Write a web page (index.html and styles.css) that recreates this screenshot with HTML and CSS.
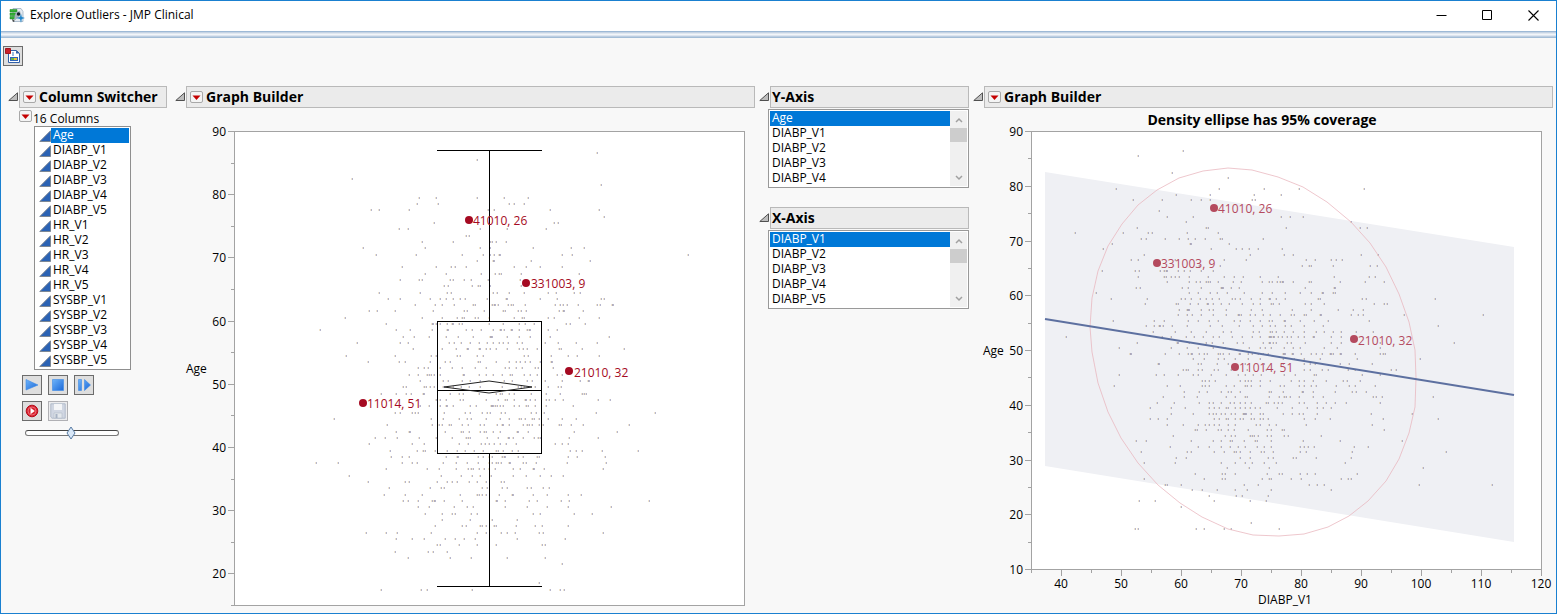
FILE: index.html
```html
<!DOCTYPE html>
<html lang="en">
<head>
<meta charset="utf-8">
<title>Explore Outliers - JMP Clinical</title>
<link rel="stylesheet" href="styles.css">
</head>
<body>
<svg class="defs" aria-hidden="true">
  <symbol id="fold" viewBox="0 0 10 10"><path d="M9.500 .8V8.500H.8Z" fill="#bdbdbd" stroke="#505050"/></symbol>
  <symbol id="red" viewBox="0 0 13 13"><path d="M2.500 4.500h8l-4 4.500z" fill="#c40000"/></symbol>
  <symbol id="up" viewBox="0 0 8 6"><path d="M1 5l3-3 3 3" fill="none" stroke="#a0a0a0" stroke-width="1.500"/></symbol>
  <symbol id="down" viewBox="0 0 8 6"><path d="M1 1l3 3 3-3" fill="none" stroke="#a0a0a0" stroke-width="1.500"/></symbol>
  <linearGradient id="blue" x2="1" y2="1"><stop stop-color="#6eb4fa"/><stop offset="1" stop-color="#1b68d8"/></linearGradient>
</svg>
<div class="window">
  <header class="titlebar">
    <svg class="app-icon" viewBox="0 0 16 16" aria-hidden="true">
      <path d="M4 .5h8l2 3v10H4z" fill="#e4ebf2" stroke="#9db0c3" stroke-width=".8"/>
      <path d="M1 1.500h7v2.500H1zM1 5h6v2.500H1zM1 8.500h6v2.500H1z" fill="#35b035" stroke="#188323" stroke-width=".5"/>
      <path d="M7 4l4-1 1 4-3 3-4 2 1-5z" fill="#a5b2bd"/><circle cx="9.500" cy="6" r="1.700" fill="#15232e"/>
      <path d="M12 5.500l.8 3.500 3.200 1-3.200 1-.8 4-1-4-4-1 4-1z" fill="#2085ca"/>
      <path d="M3 11l3 2-2 1z" fill="#444"/>
    </svg>
    <h1 class="window-title">Explore Outliers - JMP Clinical</h1>
    <div class="window-controls">
      <button type="button" aria-label="Minimize"><svg viewBox="0 0 11 11"><path d="M.5 5.500h10" stroke="#000"/></svg></button>
      <button type="button" aria-label="Maximize"><svg viewBox="0 0 11 11"><path d="M.5 .5h9v9h-9z" fill="none" stroke="#000"/></svg></button>
      <button type="button" aria-label="Close"><svg viewBox="0 0 11 11"><path d="M.5 .5l10 10M10.500 .5l-10 10" stroke="#000" stroke-width="1.100"/></svg></button>
    </div>
  </header>
  <div class="band"></div>
  <div class="toolbar">
    <button type="button" class="tool" aria-label="Report">
      <svg viewBox="0 0 16 16"><path d="M3.500 2.500h8l3 3v9h-11z" fill="#fff" stroke="#3160a8"/><path d="M11 2.500v3h3.500z" fill="#3160a8"/><path d="M7 4h2v4H7z" fill="#9abce0"/><path d="M5 9h8v4H5z" fill="#2d63b8"/><path d="M6 10h3v2H6z" fill="#63b54b"/><path d="M9 10h3v2H9z" fill="#e2c13c"/><path d="M.5 .5h5v5h-5z" fill="#c91f28" stroke="#a01820"/></svg>
    </button>
  </div>
  <main class="panels">
    <section class="panel narrow">
      <div class="panel-head"><svg class="fold"><use href="#fold"/></svg><div class="bar"><button type="button" class="menu" aria-label="Column Switcher menu"><svg viewBox="0 0 13 13"><use href="#red"/></svg></button><h2>Column Switcher</h2></div></div>
      <div class="switcher">
        <div class="sub"><button type="button" class="menu" aria-label="Columns menu"><svg viewBox="0 0 13 13"><use href="#red"/></svg></button><span>16 Columns</span></div>
        <ul class="columns" id="columns" role="listbox" aria-label="16 Columns"></ul>
        <div class="player">
          <button type="button" class="tool" aria-label="Play"><svg viewBox="0 0 16 16"><path d="M2 2.500l12 5.500-12 5z" fill="url(#blue)" stroke="#3d8ae6" stroke-width=".6"/></svg></button>
          <button type="button" class="tool" aria-label="Stop"><svg viewBox="0 0 16 16"><path d="M2.500 2.500h11v11h-11z" fill="url(#blue)" stroke="#3d8ae6" stroke-width=".6"/></svg></button>
          <button type="button" class="tool" aria-label="Step"><svg viewBox="0 0 16 16"><path d="M2.500 2.500h3v11h-3zM8.500 2.500l6 5.500-6 5.500z" fill="url(#blue)" stroke="#3d8ae6" stroke-width=".6"/></svg></button>
          <button type="button" class="tool" aria-label="Record"><svg viewBox="0 0 16 16"><circle cx="8" cy="8" r="5.800" fill="#d9202e" stroke="#b40e1c"/><circle cx="8" cy="8" r="4" fill="none" stroke="#ee8a90" stroke-width=".7"/><path d="M6.500 4.800L10.800 8l-4.300 3.200z" fill="#fff"/></svg></button>
          <button type="button" class="tool" aria-label="Save" disabled><svg viewBox="0 0 16 16"><path d="M.8 .8h14.400v14.400H2L.8 14z" fill="#d0d6e2" stroke="#b3bccb"/><path d="M4 1h8v6H4z" fill="#f4f5f7"/><path d="M4 10h8v5H4z" fill="#e3e7ec" stroke="#b3bccb" stroke-width=".6"/><path d="M5.500 11h2v4h-2z" fill="#a7b2c4"/></svg></button>
        </div>
        <input class="speed" type="range" min="0" max="100" value="49" aria-label="Animation speed">
      </div>
    </section>
    <section class="panel">
      <div class="panel-head"><svg class="fold"><use href="#fold"/></svg><div class="bar"><button type="button" class="menu" aria-label="Graph Builder menu"><svg viewBox="0 0 13 13"><use href="#red"/></svg></button><h2>Graph Builder</h2></div></div>
      <svg class="graph" id="box-plot" viewBox="175 108 580 504" role="img" aria-label="Box plot of Age">
        <rect class="frame" x="234.500" y="131.500" width="510" height="474"/>
        <path class="glow"/>
        <path class="points"/>
        <path class="outline" d="M437 150.500h105M489.500 150v171M437.500 321.500h104v132h-104zM437 390.500h105M489.500 454v132M437 586.500h105"/>
        <path class="diamond" d="M444 387L489 381 532 387 489 393Z"/>
        <g class="ticks"></g>
        <text x="186" y="373">Age</text>
        <g class="marks"><circle cx="469" cy="220" r="4"/><text x="473" y="225">41010, 26</text><circle cx="526" cy="283" r="4"/><text x="531" y="288">331003, 9</text><circle cx="569" cy="371" r="4"/><text x="574" y="377">21010, 32</text><circle cx="363" cy="403" r="4"/><text x="367" y="408">11014, 51</text></g>
      </svg>
    </section>
    <div class="axes">
      <section class="panel">
        <div class="panel-head"><svg class="fold"><use href="#fold"/></svg><div class="bar plain"><h2>Y-Axis</h2></div></div>
        <div class="picker">
          <ul role="listbox" aria-label="Y-Axis"><li role="option" aria-selected="true">Age</li><li role="option">DIABP_V1</li><li role="option">DIABP_V2</li><li role="option">DIABP_V3</li><li role="option">DIABP_V4</li></ul>
          <div class="scroll"><button type="button" aria-label="Scroll up"><svg viewBox="0 0 8 6"><use href="#up"/></svg></button><span class="thumb"></span><button type="button" aria-label="Scroll down"><svg viewBox="0 0 8 6"><use href="#down"/></svg></button></div>
        </div>
      </section>
      <section class="panel">
        <div class="panel-head"><svg class="fold"><use href="#fold"/></svg><div class="bar plain"><h2>X-Axis</h2></div></div>
        <div class="picker">
          <ul role="listbox" aria-label="X-Axis"><li role="option" aria-selected="true">DIABP_V1</li><li role="option">DIABP_V2</li><li role="option">DIABP_V3</li><li role="option">DIABP_V4</li><li role="option">DIABP_V5</li></ul>
          <div class="scroll"><button type="button" aria-label="Scroll up"><svg viewBox="0 0 8 6"><use href="#up"/></svg></button><span class="thumb"></span><button type="button" aria-label="Scroll down"><svg viewBox="0 0 8 6"><use href="#down"/></svg></button></div>
        </div>
      </section>
    </div>
    <section class="panel">
      <div class="panel-head"><svg class="fold"><use href="#fold"/></svg><div class="bar"><button type="button" class="menu" aria-label="Graph Builder menu"><svg viewBox="0 0 13 13"><use href="#red"/></svg></button><h2>Graph Builder</h2></div></div>
      <svg class="graph" id="scatter" viewBox="973 108 580 504" role="img" aria-label="Age by DIABP_V1">
        <text class="chart-title" x="1262" y="125">Density ellipse has 95% coverage</text>
        <rect class="frame" x="1031.500" y="131.500" width="510" height="438"/>
        <path class="fit-band" d="M1045 172L1514 247V542L1045 466Z"/>
        <path class="glow"/>
        <path class="points"/>
        <path class="ellipse" d="M1228 168L1252 170 1278 177 1303 187 1327 202 1351 222 1370 243 1386 267 1399 294 1409 322 1415 350 1416 378 1415 407 1409 433 1399 459 1386 481 1368 501 1349 516 1328 527 1304 534 1279 536 1253 535 1228 529 1202 517 1180 503 1158 485 1138 463 1121 438 1108 412 1098 383 1092 352 1090 327 1092 298 1098 271 1108 246 1122 224 1138 205 1157 190 1179 178 1203 171Z"/>
        <path class="fit" d="M1045 319L1514 395"/>
        <g class="ticks"></g>
        <text x="983" y="355">Age</text>
        <text class="center" x="1285" y="604">DIABP_V1</text>
        <g class="marks soft"><circle cx="1214" cy="208" r="4"/><text x="1218" y="213">41010, 26</text><circle cx="1157" cy="263" r="4"/><text x="1161" y="268">331003, 9</text><circle cx="1354" cy="339" r="4"/><text x="1358" y="345">21010, 32</text><circle cx="1235" cy="367" r="4"/><text x="1239" y="372">11014, 51</text></g>
      </svg>
    </section>
  </main>
</div>
<script src="plots.js"></script>
</body>
</html>
```
FILE: styles.css
```css
* { box-sizing: border-box; }
body { margin: 0; background: #f8f8f8; color: #000; font: 12px/15px "Open Sans", "Noto Sans", sans-serif; }
h1, h2, ul { margin: 0; padding: 0; list-style: none; }
button { margin: 0; padding: 0; border: 0; background: none; font: inherit; display: flex; align-items: center; justify-content: center; }
.defs { position: absolute; width: 0; height: 0; }
.window { min-height: 100vh; border: 1px solid #1a80d0; background: #f8f8f8; }

.titlebar { display: flex; align-items: center; height: 30px; padding-left: 8px; background: #fff; }
.app-icon { width: 16px; height: 16px; margin-right: 5px; }
.window-title { flex: 1; font-size: 12px; line-height: 16px; padding-bottom: 2px; font-weight: 400; }
.window-controls { display: flex; align-self: stretch; }
.window-controls button { width: 46px; padding-bottom: 2px; }
.window-controls svg { width: 11px; height: 11px; }
.band { height: 7px; background: linear-gradient(#9db9d6 0 1px, #c5d3e4 1px 2px, #dfe7f0 2px 3px, #f2f5f9 3px 4px, #dce5f0 4px 5px, #bdcee1 5px 6px, #a3bdd7 6px 7px); }
.toolbar { height: 48px; padding: 8px 2px; }

.tool { width: 20px; height: 20px; border: 1px solid #6c6c6c; background: #dedede; }
.tool svg { width: 16px; height: 16px; }
.tool:disabled { border-color: #b0b0b4; background: #ececee; }

.panels { display: grid; grid-template-columns: 163px minmax(0, 1fr) 210px minmax(0, 1fr); column-gap: 4px; padding: 0 3px 0 7px; align-items: start; }
.panel-head { display: flex; align-items: center; }
.narrow > .panel-head { margin-right: 4px; }
.fold { flex: none; width: 10px; height: 10px; margin-right: 1px; }
.bar { flex: 1; display: flex; align-items: center; height: 22px; padding-left: 3px; border: 1px solid #b9b9b9; background: #ebebeb; }
.bar h2 { padding-left: 3px; font-size: 14px; line-height: 20px; font-weight: 700; white-space: nowrap; }
.bar.plain { padding-left: 0; }
.bar.plain h2 { padding-left: 1px; }
.menu { flex: none; width: 13px; height: 12px; border: 1px solid #a8a8a8; border-radius: 2px; background: #f4f4f4; }
.menu svg { flex: none; width: 13px; height: 13px; }

.switcher { padding-left: 11px; }
.sub { display: flex; align-items: center; gap: 1px; height: 18px; padding-top: 2px; }
.sub .menu { margin-bottom: 4px; }
.columns { width: 97px; margin-left: 15px; padding: 1px; border: 1px solid #8f8f8f; background: #fff; }
.columns li { display: flex; align-items: center; height: 15px; padding-left: 3px; }
.columns svg { flex: none; width: 12px; height: 12px; }
.columns span { flex: 1; height: 15px; line-height: 14px; padding-left: 2px; }
.columns [aria-selected="true"] span { background: #0078d7; color: #fff; }
.player { display: grid; grid-template-columns: repeat(3, 20px); gap: 6px; padding: 5px 0 0 3px; }
.speed { -webkit-appearance: none; appearance: none; display: block; width: 94px; height: 16px; margin: 4px 0 0 6px; background: none; }
.speed::-webkit-slider-runnable-track { height: 6px; border: 1px solid #777; border-top-color: #444; border-radius: 3px; background: #fff; }
.speed::-webkit-slider-thumb { -webkit-appearance: none; width: 10px; height: 14px; margin-top: -5px; background: url("data:image/svg+xml,%3Csvg xmlns='http://www.w3.org/2000/svg' viewBox='0 0 10 14'%3E%3Cpath d='M5 1L9 7 5 13 1 7Z' fill='%23d9e8f8' stroke='%23587ba3'/%3E%3C/svg%3E"); }

.axes { display: grid; gap: 19px; }
.picker { display: flex; margin: 1px 0 0 9px; padding: 1px; border: 1px solid #999; background: #fff; }
.picker ul { flex: 1; }
.picker li { height: 15px; line-height: 14px; padding-left: 2px; }
.picker [aria-selected="true"] { background: #0078d7; color: #fff; }
.scroll { display: flex; flex-direction: column; width: 17px; background: #f0f0f0; }
.scroll button { height: 17px; }
.scroll button:last-child { margin-top: auto; }
.scroll svg { width: 8px; height: 6px; }
.thumb { height: 14px; background: #cdcdcd; }

.graph { display: block; width: 100%; height: auto; }
.graph text { font-size: 12px; }
.frame { fill: #fff; stroke: #a3a3a3; }
.points { fill: #7c7ca4; fill-opacity: .55; shape-rendering: crispEdges; }
.glow { fill: #d8b878; fill-opacity: .35; shape-rendering: crispEdges; }
.outline { fill: none; stroke: #000; shape-rendering: crispEdges; }
.diamond { fill: none; stroke: #222; }
.ticks path { fill: none; stroke: #a3a3a3; shape-rendering: crispEdges; }
.ticks text { text-anchor: end; }
.graph .center { text-anchor: middle; }
.graph .chart-title { font-size: 14px; font-weight: 700; text-anchor: middle; }
.marks { fill: #a50a22; }
.marks.soft { fill: #b44a5e; }
.fit-band { fill: #eff0f4; }
.ellipse { fill: none; stroke: #e8b4bc; stroke-opacity: .75; }
.fit { fill: none; stroke: #5d70a0; stroke-width: 2; }
```
FILE: plots.js
```js
const names = ["Age"];
for (const group of ["DIABP", "HR", "SYSBP"]) {
  for (let visit = 1; visit <= 5; visit++) names.push(`${group}_V${visit}`);
}
document.getElementById("columns").innerHTML = names.map((name, i) =>
  `<li role="option" aria-selected="${i === 0}"><svg viewBox="0 0 12 12" aria-hidden="true"><path d="M11.500 .8V11.500H.8Z" fill="#2a62b4" stroke="#7c8794"/></svg><span>${name}</span></li>`
).join("");

// Each block has an origin, a horizontal scale and rows of "y:x,x,x" at three units per pixel.
const boxBlocks = [
  [230, 125, 3, `105:741 162:366 219:567,618,741 237:561,624 255:423,447,537,774,792 294:612 312:507,534,750 333:708,717 351:576,669,780,786,798 369:399,585,750,780 390:438,558,696,759,780,792,808 408:741,789,792 426:516,618,663,675,708 447:585,648,753,795,807 465:510,567,576,660,669,702,723,774 483:642,654,726,744,750,780 504:447,570,651,663,789,801 522:474,510,600,630,648,669,690,705,772 540:555,615,636,672,730,735,786,792,795,804 558:417,441,495,609,702,711,762 579:345,576,636,681,696,702,735,744,777 597:468,606,609,618,630,651,666,669,687,696,777 615:270,498,540,606,651,654,708,726,753,789 636:519,552,597,648,684,729,780,786 654:381,510,534,657,672,693,720,747,772,789,807 672:549,636,678,711,714,747,752,768,780,798 693:348,495,603,618,681,690,741,759 711:414,507,525,600,645,660,744,750,798`],
  [490, 125, 3, `84:321 180:333 219:42,114 237:57,72,102 255:12,180,327 276:342 294:192,204 312:51,168 351:1,6,18,48 369:129,243,282 390:12,30,216,246,594 408:12,123,300 426:72,108,150,216 447:15,27,33,93,267 465:90 483:0,93 504:9,21,57,102,174,198,252,270 522:48,51,150,201,333,342 540:6,12,24,54,63,69,105,195,210,219,231,264,321,330,366,369 558:39,45,84,93,108,207,219,222,279 579:72,96,102,174,192,267,327 597:39,87,105,132,228,240,285 615:9,30,33,42,63,66,87,111,117,120,174,201 636:3,51,87,120,180,357 654:9,27,39,54,81,96,165,204,258,321 672:0,18,51,87,99,111,141,207,213,276,402 693:102,114,183,234,261,327 711:18,57,78,90,105,120,150,183,186`],
  [180, 360, 3, `24:714,732,744,780,816,846,885,918 45:687,714,741,747,753,762,780,849,853,899,918 63:720,789,804,846,870,900 81:669,678,732,738,750,762,789,819,843,867,900 102:603,648,678,693,730,733,810,837,849,897 120:768,780,798,840,849,918 138:720,747,780,798,801,819,870,888 159:645,660,696,705,714,792,855,870,907,922 177:462,753,789,837,861,873,918 195:621,756,777,786,807,813,846,865,900,912 216:648,687,690,795,843,849,867,900,912,918 234:585,615,651,717,768,816,858,864,870,921 252:567,696,732,837,864,903,915,927 273:630,711,729,735,766,801,831,855,882,909 291:633,666,687,798,831,834,894,909,927 309:408,474,666,696,711,789,828,861,894,927 327:618,741,777,828,864,873,879,897,912,927 348:507,783,843,876,900 366:564,675,687,771,801,816,831,867,891,918 384:627,750,783,792,906,921 405:612,675,726,840,892,897,906,918 423:669,684,714,756,762,765,792,846 441:714,747,822,861,879 462:735,786,816,825,873,891 480:786,870 498:765,846,858,900,906,918 519:558,618,651,753,891,918 537:648,696,732,795,825,852,885 555:771,780,837,891 576:645,744,759,801 594:684,810,873 690:603,723,741,876`],
  [490, 360, 3, `24:45,57,78,96,135,144,189 45:9,36,60,66,102,120,141,201,216 63:42,66,111,126,165,216,270,294,297 81:36,84,93,102,135,174,204,213 102:18,30,36,57,72,123,168,210,276,282,288 120:24,45,51,72,105,108,120,135,168,177,195,219,324,360 138:3,6,9,15,21,30,39,72,87,108,114,135,168,249 159:0,33,45,123,138,162,318,495 177:30,57,87,93,105,126,132,147,174,216,258 195:21,36,39,57,99,111,117,126,147,159,207,213,243,279,417 216:9,30,81,84,114,252,381 234:24,54,57,69,99,132,144,150,237,324 252:12,30,48,78,195,216,234 273:18,24,39,66,84,240,258,276,336,444 291:6,36,42,45,84,99,141,147,234,261,345 309:6,18,24,33,57,60,99,108,138,231,348 327:15,69,90,129,132,162,339 348:3,69,108,150,183,219 366:33,42 384:36,51,111,123,159,177 405:27,66,69,129,171,234,273 423:18,21,45,117,141,213,237,477 441:45,111,171,234,363 462:129,150,252,306 480:6,81 498:12,18,78,135,156,234 519:33,51,75,147,159,339 537:81,225 555:18,156,165 594:51,165 612:216 669:147 690:180,210,222`]
];
const scatterBlocks = [
  [975, 105, 3, `138:624 153:489 204:591 219:759 252:423,732,867 270:603,705,837 285:474,561,648,678,705,831,840 318:552 336:576,654 351:633 369:486,693,699 384:300,444,519,531,636,729 402:498,513,570,612,639,660,690,735,741,864 417:411,645,648,762 432:384,708,783,801,822,849 450:507,825 465:468,489,600,747,813 483:672,735 498:381,480,492,555,567,573,576,609,627,645,678,714 516:489,567,573,588,600,612,642,699,747,777,804,855 531:576,642,663,675,693,699,705,729,774,798,861,891 549:483,495,621,639,678,738,741,744,768,792 564:363,642,669,705,726,756,807,861 582:408,516,618,630,648,675,693,711,732,771,780,795,828,855,882 597:510,603,609,645,669,696,699,714,738,762,801,834,855,888 615:612,636,639,642,678,702,714,753,828,861 630:609,636,651,678,714,753,789,792,798,825,840,864 648:414,537,567,639,669,702,729,777,795,825,855,882 663:513,537,552,555,564,591,636,705,741,792,834,861 681:534,600,648,693,744,768,834,852,891 696:273,561,588,633,657,684,714,732,771,801,831,855,885,894 714:486,606,609,642,693,711,744,786,804,864,882,894 729:432,588,636,669,714,750,822,855,888 747:468,570,612,639,672,696,735,762,792,819,849,879`],
  [1265, 105, 3, `252:102,297 270:48 336:48,75,114 351:258 369:63,285,306 432:51 450:57,84,288,339 465:123,150,198,213,231 483:111,132,138,204,315,336 516:39,207,312,330 531:12,36,45,51,54,84,132,138,225,300,357 549:120,207,210 564:21,60,105,138,171,174,204,210 582:15,33,60,159,165,291,303,510 597:24,42,120,138,177,327,357,366 615:81,138,219,264,294 630:15,45,78,87,117,123,165,168,258,279,294,417,654 648:21,57,60,105,147,189,312 663:15,30,60,78,117,174,519 681:15,33,57,84,117,153,177,204,228,273,324 696:12,18,27,39,51,66,78,99,117,144,147,198,228 714:15,33,66,78,120,198,228,345,567 729:0,57,84,105,177,216,345 747:54,60,84,108,138,153,198,228,270,345,360`],
  [975, 350, 2.694, `12:420,582,585,618,657,670,714,738,747,777,834,855,936,957,966,984,1101,1107 27:588,618,657,672,702,738,768,831,861,888,930,1030,1200 42:495,498,603,610,654,682,729,780,831,888,903,918,984,1010,1070 60:561,570,576,603,612,645,657,690,735,786,888,905,936,951,1005,1024,1122,1135 75:390,489,510,548,588,603,636,678,711,729,750,771,834,864,915,921,1043,1093 93:612,620,633,648,714,730,738,744,768,796,852,873,888,912,948,993,1003,1038 108:376,518,553,612,620,633,678,699,730,733,744,768,822,834,873,888,907,921,975,1008,1026,1080 126:564,606,627,663,684,690,714,793,800,831,882,886,912,972,1017,1027,1054 141:507,564,600,678,702,730,735,793,820,834,838,849,873,912,939,1073,1082,1097,1235 159:492,537,606,633,642,663,687,699,714,730,744,784,790,808,817,828,873,888,922,946,972,1000,1092 174:473,529,567,633,645,660,678,684,703,714,730,741,756,768,814,855,897,922,939,960 192:529,588,633,642,651,663,675,690,703,723,726,729,732,744,768,778,831,855,873,886,922,1068,1179 207:473,494,518,645,660,678,684,702,714,723,744,753,768,778,790,888,918,957,1100,1248 225:518,561,603,620,633,645,660,684,702,759,768,793,811,892,1070 240:594,600,623,657,663,684,699,738,787,799,829,834,1103 258:534,675,690,703,741,747,753,765,787,799,833,844,933 273:435,462,583,642,663,687,693,727,757,762,799,886,984,1151 291:526,602,631,663,687,711,729,762,780,799,877,889,898,914,1022,1060 306:448,572,583,645,672,699,705,714,742,771,780,804,877,892,1017,1270 324:543,570,714,742,790,804,858,866,919,1014 339:456,540,663,702,730,747,780,812,998 354:680,739,793,1208 372:593,666,675,702,787,820,828,876,895,918,1030 387:456,618,666,675,774,793,799,852,880,987,1006,1014 405:514,519,556,726,763,901,922,941,1197,1394 420:586,612,653,703,735,799,960 438:631,705,720,790 453:443,486,645,742,786 471:556 519:744 537:432,440,596,618,672,690,820`]
];

function pointPath(blocks, shift) {
  let d = "";
  for (const [left, top, scale, rows] of blocks) {
    for (const row of rows.split(" ")) {
      const [y, xs] = row.split(":");
      const py = Math.round(top + y / 3) - 1;
      for (const x of xs.split(",")) d += `M${Math.floor(left + x / scale) + shift} ${py}h1v2h-1z`;
    }
  }
  return d;
}

function leftAxis(x, first, last, top, bottom) {
  let d = "", labels = "";
  for (let age = first; age <= last; age += 5) {
    const y = Math.round(bottom - (age - first) / (last - first) * (bottom - top));
    const major = age % 10 === 0;
    d += `M${x} ${y + 0.5}h${major ? -6 : -3}`;
    if (major) labels += `<text x="${x - 8}" y="${y + 5}">${age}</text>`;
  }
  return `<path d="${d}"/>${labels}`;
}

function bottomAxis() {
  let d = "", labels = "";
  for (let v = 35; v <= 120; v += 5) {
    const x = 1031 + (v - 35) * 6;
    const major = v % 10 === 0;
    d += `M${x + 0.5} 570v${major ? 6 : 3}`;
    if (major) labels += `<text class="center" x="${x}" y="588">${v}</text>`;
  }
  return `<path d="${d}"/>${labels}`;
}

function drawPoints(id, blocks) {
  document.querySelector(`#${id} .points`).setAttribute("d", pointPath(blocks, 0));
  document.querySelector(`#${id} .glow`).setAttribute("d", pointPath(blocks, -1));
}

drawPoints("box-plot", boxBlocks);
drawPoints("scatter", scatterBlocks);
document.querySelector("#box-plot .ticks").innerHTML = leftAxis(234, 15, 90, 131, 605);
document.querySelector("#scatter .ticks").innerHTML = leftAxis(1031, 10, 90, 131, 569) + bottomAxis();
```
